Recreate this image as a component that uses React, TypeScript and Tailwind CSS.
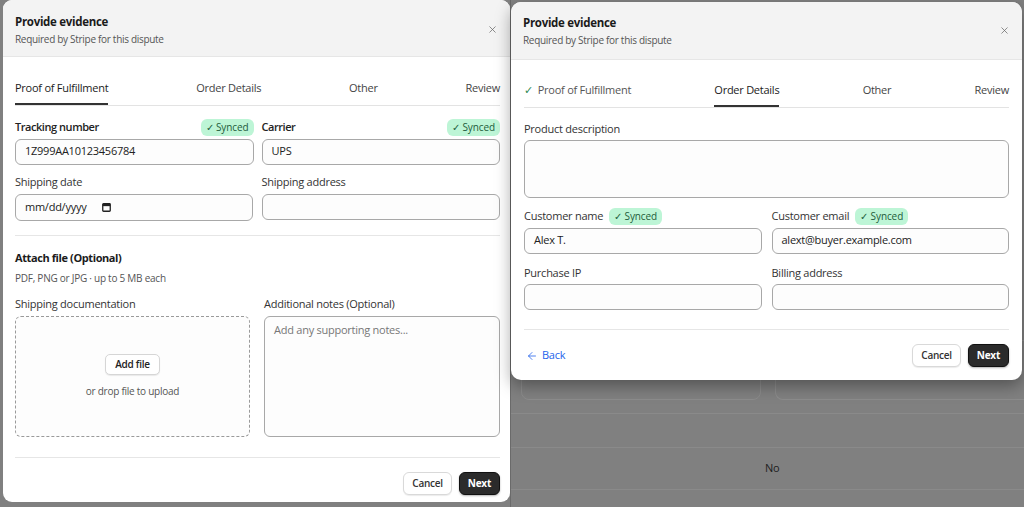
import { X, ArrowLeft } from 'lucide-react';

const font = { fontFamily: '"Open Sans", "Noto Sans", sans-serif' };

function Synced() {
  return (
    <span className="inline-flex h-[17px] items-center rounded-[6px] bg-[#bdf5d6] px-[5px] text-[10px] leading-none tracking-[-0.1px] text-[#1d5c3b]">
      ✓ Synced
    </span>
  );
}

function Input({ value }: { value?: string }) {
  return (
    <div className="flex h-[26px] items-center rounded-[6px] border border-[#a8a8a8] bg-[#fdfdfd] px-[9px] text-[11px] text-[#222]">
      {value}
    </div>
  );
}

function Header({ top }: { top: string }) {
  return (
    <div className={`flex h-[58px] items-start justify-between border-b border-[#e6e6e6] bg-[#f3f3f3] px-[12px] ${top}`}>
      <div>
        <div className="text-[11.5px] font-bold leading-[16px] tracking-[-0.3px] text-[#1b1b1b]">Provide evidence</div>
        <div className="mt-[2px] text-[10px] leading-[14px] tracking-[-0.3px] text-[#555]">Required by Stripe for this dispute</div>
      </div>
      <X size={11} strokeWidth={1.6} className="mt-[10px] text-[#666]" />
    </div>
  );
}

function Tabs({ active, top }: { active: number; top: string }) {
  const tabs = ['Proof of Fulfillment', 'Order Details', 'Other', 'Review'];
  return (
    <div className="flex justify-between border-b border-[#e3e3e3]">
      {tabs.map((t, i) => (
        <div
          key={t}
          className={`border-b-2 pb-[8px] text-[11px] leading-[15px] ${top} ${
            i === active ? 'border-[#333] font-medium text-[#1b1b1b]' : 'border-transparent text-[#444]'
          } ${i < active ? 'text-[#555]' : ''}`}
        >
          {i < active && <span className="mr-[5px] text-[#2f8a55]">✓</span>}
          {t}
        </div>
      ))}
    </div>
  );
}

function Footer({ back }: { back?: boolean }) {
  return (
    <div className="mt-auto flex items-center justify-between border-t border-[#e6e6e6] pt-[14px]">
      {back ? (
        <div className="flex items-center gap-[4px] pl-[2px] text-[11px] text-[#2563eb]">
          <ArrowLeft size={12} strokeWidth={1.6} />
          Back
        </div>
      ) : (
        <div />
      )}
      <div className="flex gap-[7px]">
        <button className="h-[23px] rounded-[6px] border border-[#d9d9d9] bg-white px-[8px] text-[10px] font-semibold text-[#333] shadow-[0_1px_1px_rgba(0,0,0,0.08)]">
          Cancel
        </button>
        <button className="h-[23px] rounded-[6px] border border-[#111] bg-[#2b2b2b] px-[8px] text-[10px] font-bold text-white shadow-[0_1px_2px_rgba(0,0,0,0.3)]">
          Next
        </button>
      </div>
    </div>
  );
}

function LeftModal() {
  return (
    <div className="flex h-[502px] w-[507px] flex-col overflow-hidden rounded-[9px] bg-white">
      <Header top="pt-[14px]" />
      <div className="flex flex-1 flex-col pb-[7px] pl-[12px] pr-[10px]">
        <Tabs active={0} top="pt-[23px]" />
        <div className="grid grid-cols-2 gap-x-[8px] pt-[13px]">
          <div>
            <div className="mb-[3px] flex items-center justify-between">
              <span className="text-[11px] font-semibold tracking-[-0.45px] text-[#222]">Tracking number</span>
              <Synced />
            </div>
            <Input value="1Z999AA10123456784" />
          </div>
          <div>
            <div className="mb-[3px] flex items-center justify-between">
              <span className="text-[11px] font-semibold tracking-[-0.45px] text-[#222]">Carrier</span>
              <Synced />
            </div>
            <Input value="UPS" />
          </div>
          <div className="mt-[9px]">
            <div className="mb-[4px] text-[11px] text-[#333]">Shipping date</div>
            <div className="flex h-[27px] w-[238px] items-center gap-[16px] rounded-[6px] border border-[#a8a8a8] bg-[#fdfdfd] px-[9px] text-[11px] text-[#222]">
              mm/dd/yyyy
              <svg width="9" height="9" viewBox="0 0 9 9">
                <rect x="0.75" y="0.75" width="7.5" height="7.5" rx="0.8" fill="none" stroke="#222" strokeWidth="1.3" />
                <rect x="0.75" y="0.75" width="7.5" height="2.4" fill="#222" />
              </svg>
            </div>
          </div>
          <div className="mt-[9px]">
            <div className="mb-[4px] text-[11px] text-[#333]">Shipping address</div>
            <Input />
          </div>
        </div>
        <div className="mt-[14px] border-t border-[#e6e6e6] pt-[14px]">
          <div className="text-[11px] font-bold tracking-[-0.4px] text-[#1b1b1b]">Attach file (Optional)</div>
          <div className="mt-[4px] text-[10px] text-[#555]">PDF, PNG or JPG · up to 5 MB each</div>
        </div>
        <div className="mt-[10px] flex gap-[14px]">
          <div className="w-[235px]">
            <div className="mb-[4px] text-[11px] text-[#333]">Shipping documentation</div>
            <div className="flex h-[121px] flex-col items-center justify-center rounded-[6px] border border-dashed border-[#9a9a9a] bg-[#fdfdfd]">
              <button className="h-[21px] rounded-[5px] border border-[#d6d6d6] bg-white px-[9px] text-[10px] font-semibold text-[#222] shadow-[0_1px_1px_rgba(0,0,0,0.08)]">
                Add file
              </button>
              <div className="mt-[9px] text-[10px] text-[#555]">or drop file to upload</div>
            </div>
          </div>
          <div className="flex-1">
            <div className="mb-[4px] text-[11px] text-[#333]">Additional notes (Optional)</div>
            <div className="h-[121px] rounded-[6px] border border-[#a8a8a8] bg-[#fdfdfd] px-[9px] pt-[5px] text-[11px] text-[#777]">
              Add any supporting notes...
            </div>
          </div>
        </div>
        <div className="h-[20px]" />
        <Footer />
      </div>
    </div>
  );
}

function RightModal() {
  return (
    <div className="flex h-[378px] w-[511px] flex-col overflow-hidden rounded-[10px] bg-white shadow-[0_6px_16px_rgba(0,0,0,0.35)]">
      <Header top="pt-[13px]" />
      <div className="flex flex-1 flex-col pb-[13px] pl-[13px] pr-[13px]">
        <Tabs active={1} top="pt-[22px]" />
        <div className="pt-[13px]">
          <div className="mb-[2px] text-[11px] text-[#333]">Product description</div>
          <div className="h-[58px] rounded-[6px] border border-[#a8a8a8] bg-[#fdfdfd]" />
        </div>
        <div className="grid grid-cols-2 gap-x-[10px] pt-[10px]">
          <div>
            <div className="mb-[3px] flex items-center gap-[6px]">
              <span className="text-[11px] text-[#333]">Customer name</span>
              <Synced />
            </div>
            <Input value="Alex T." />
          </div>
          <div>
            <div className="mb-[3px] flex items-center gap-[6px]">
              <span className="text-[11px] text-[#333]">Customer email</span>
              <Synced />
            </div>
            <Input value="alext@buyer.example.com" />
          </div>
          <div className="mt-[11px]">
            <div className="mb-[3px] text-[11px] text-[#333]">Purchase IP</div>
            <Input />
          </div>
          <div className="mt-[11px]">
            <div className="mb-[3px] text-[11px] text-[#333]">Billing address</div>
            <Input />
          </div>
        </div>
        <Footer back />
      </div>
    </div>
  );
}

export default function App() {
  return (
    <div style={font} className="flex h-[507px] w-[1024px] overflow-hidden bg-[#808080] tracking-[-0.25px]">
      <div className="w-[510px] shrink-0 pl-[3px]">
        <LeftModal />
      </div>
      <div className="relative w-[514px] shrink-0 border-l border-[#6a6a6a]">
        {/* page content behind the backdrop */}
        <div className="pt-[340px]">
          <div className="flex gap-[14px] pl-[10px]">
            <div className="h-[60px] w-[240px] rounded-[8px] border border-[#8c8c8c]" />
            <div className="h-[60px] flex-1 rounded-l-[8px] border border-r-0 border-[#8c8c8c]" />
          </div>
          <div className="mt-[13px] h-[34px] border-t border-[#8a8a8a]" />
          <div className="flex h-[42px] items-center border-t border-[#8a8a8a] pl-[254px] text-[11px] text-[#1e1e1e]">No</div>
          <div className="border-t border-[#8a8a8a]" />
        </div>
        <div className="absolute left-0 top-[2px]">
          <RightModal />
        </div>
      </div>
    </div>
  );
}
